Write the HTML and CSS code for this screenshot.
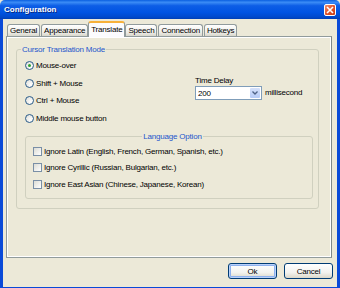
FILE: index.html
```html
<!DOCTYPE html>
<html lang="en">
<head>
  <meta charset="UTF-8">
  <title>Configuration</title>
  <link rel="stylesheet" href="styles.css">
</head>
<body>
  <div class="window">
    <div class="titlebar">
      <span class="title">Configuration</span>
      <button class="close" aria-label="Close">
        <svg width="8" height="8" viewBox="0 0 8 8"><path d="M1 1L7 7M7 1L1 7" stroke="#fff" stroke-width="1.6"/></svg>
      </button>
    </div>
    <div class="frame">
      <div class="tabs">
        <div class="tab">General</div>
        <div class="tab">Appearance</div>
        <div class="tab active">Translate</div>
        <div class="tab">Speech</div>
        <div class="tab">Connection</div>
        <div class="tab">Hotkeys</div>
      </div>
      <div class="panel">
        <fieldset class="group">
          <legend>Cursor Translation Mode</legend>
          <div class="mode-row">
            <div class="radios">
              <label class="opt"><span class="radio checked"></span>Mouse-over</label>
              <label class="opt"><span class="radio"></span>Shift + Mouse</label>
              <label class="opt"><span class="radio"></span>Ctrl + Mouse</label>
              <label class="opt"><span class="radio"></span>Middle mouse button</label>
            </div>
            <div class="delay">
              <div class="delay-label">Time Delay</div>
              <div class="delay-row">
                <div class="select">
                  <span class="select-value">200</span>
                  <span class="select-btn">
                    <svg width="6" height="4" viewBox="0 0 6 4"><path d="M0.5 0.5L3 3L5.5 0.5" fill="none" stroke="#4d6185" stroke-width="1.3"/></svg>
                  </span>
                </div>
                <span class="unit">millisecond</span>
              </div>
            </div>
          </div>
          <fieldset class="group lang">
            <legend>Language Option</legend>
            <label class="opt"><span class="check"></span>Ignore Latin (English, French, German, Spanish, etc.)</label>
            <label class="opt"><span class="check"></span>Ignore Cyrillic (Russian, Bulgarian, etc.)</label>
            <label class="opt"><span class="check"></span>Ignore East Asian (Chinese, Japanese, Korean)</label>
          </fieldset>
        </fieldset>
      </div>
      <div class="buttons">
        <button class="btn default">Ok</button>
        <button class="btn">Cancel</button>
      </div>
    </div>
  </div>
</body>
</html>
```

FILE: styles.css
```css
body {
  margin: 0;
  font-family: "Liberation Sans", Arial, sans-serif;
  font-size: 8px;
  letter-spacing: -0.2px;
  color: #000;
}

.window {
  width: 340px;
  height: 288px;
  display: flex;
  flex-direction: column;
  background-color: #ece9d8;
}

.titlebar {
  flex: none;
  height: 19px;
  display: flex;
  align-items: center;
  justify-content: space-between;
  padding: 0 4px 0 4px;
  background: linear-gradient(#0a5fe0, #3b8cf6 12%, #0d5ee6 30%, #0054e3 65%, #0049cc 90%, #003fb4);
  border-radius: 5px 5px 0 0;
}

.title {
  color: #fff;
  font-weight: bold;
  font-size: 8px;
  letter-spacing: 0;
  text-shadow: 1px 1px 0 #0a2a80;
}

.close {
  width: 12px;
  height: 12px;
  padding: 0;
  display: flex;
  align-items: center;
  justify-content: center;
  border: 1px solid #fff;
  border-radius: 2px;
  background: linear-gradient(135deg, #f09070, #e2542c 50%, #c63c16);
}

.frame {
  flex: none;
  height: 266px;
  display: flex;
  flex-direction: column;
  border-style: solid;
  border-color: #0a4ad8;
  border-width: 0 3px 3px 3px;
  padding: 2px 0 0 3px;
}

.tabs {
  flex: none;
  display: flex;
  align-items: flex-end;
  height: 15px;
  padding-left: 1px;
  position: relative;
  z-index: 1;
}

.tab {
  height: 11px;
  line-height: 11px;
  padding: 0 2px;
  margin-right: 1px;
  border: 1px solid #919b9c;
  border-bottom: none;
  border-radius: 3px 3px 0 0;
  background: linear-gradient(#fff, #ecebe5 70%, #d8d7cc);
  color: #000;
}

.tab.active {
  height: 14px;
  line-height: 13px;
  padding: 0 2px;
  margin: 0 0 -1px -1px;
  background: #fcfcfe;
  border-top: 2px solid #f7b13a;
}

.panel {
  flex: none;
  width: 303px;
  height: 213px;
  border: 1px solid #919b9c;
  border-right-color: #7f8888;
  box-shadow: inset 1px 1px 0 #fff, inset -1px -1px 0 #fff;
  padding: 7px 12px 0 9px;
}

.group {
  margin: 0;
  border: 1px solid #d0d0bf;
  border-radius: 3px;
  padding: 0 0 9px 8px;
}

.group legend {
  color: #2556cc;
  padding: 0 1px;
  margin-left: -4px;
  line-height: 11px;
}

.mode-row {
  display: flex;
  height: 74px;
  padding-top: 2px;
}

.radios {
  width: 170px;
  display: flex;
  flex-direction: column;
}

.opt {
  display: flex;
  align-items: center;
  height: 17.5px;
  gap: 2px;
}

.radio {
  width: 7px;
  height: 7px;
  border: 1px solid #2a5c8a;
  border-radius: 50%;
  background: radial-gradient(circle at 70% 70%, #fff, #dcdcd6);
  display: flex;
  align-items: center;
  justify-content: center;
}

.radio.checked::after {
  content: "";
  width: 3px;
  height: 3px;
  border-radius: 50%;
  background: #2fa22f;
}

.delay {
  padding-top: 18px;
}

.delay-label {
  height: 11px;
  line-height: 11px;
}

.delay-row {
  display: flex;
  align-items: center;
  gap: 3px;
}

.select {
  width: 62px;
  height: 12px;
  display: flex;
  align-items: center;
  justify-content: space-between;
  border: 1px solid #7f9db9;
  background: #fff;
  padding: 0 1px 0 2px;
}

.select-btn {
  width: 10px;
  height: 10px;
  display: flex;
  align-items: center;
  justify-content: center;
  border-radius: 1px;
  background: linear-gradient(#d5e1fb, #b6cbf7);
}

.unit {
  margin-top: -1px;
}

.group.lang {
  width: 279px;
  padding: 1px 0 5px 7px;
}

.group.lang legend {
  margin: 0 auto;
}

.lang .opt {
  height: 16.5px;
}

.check {
  width: 7px;
  height: 7px;
  border: 1px solid #7a8fa6;
  background: linear-gradient(135deg, #dcdcd4, #fff);
}

.buttons {
  flex: none;
  display: flex;
  justify-content: flex-end;
  gap: 7px;
  padding: 5px 4px 0 0;
}

.btn {
  width: 49px;
  height: 16px;
  padding: 0;
  font-family: inherit;
  font-size: 8px;
  letter-spacing: -0.2px;
  border: 1px solid #003c74;
  border-radius: 3px;
  background: linear-gradient(#fff, #f3f3ef 60%, #dcd8ca);
  color: #000;
}

.btn.default {
  box-shadow: inset 0 0 0 1px #b9d1fa, inset 0 0 0 2px #8eb1ee;
}
```
